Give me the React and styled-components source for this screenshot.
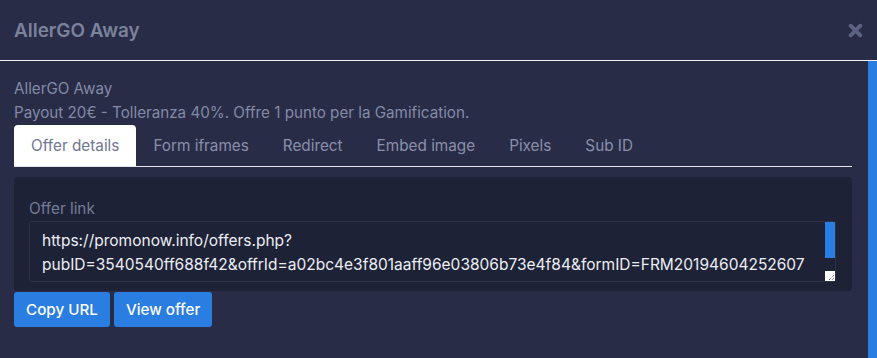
import React from "react";
import styled, { createGlobalStyle } from "styled-components";

const GlobalStyle = createGlobalStyle`
  html, body {
    margin: 0;
    padding: 0;
    background: #282c47;
  }
  body {
    font-family: Inter, "Noto Sans", "Liberation Sans", sans-serif;
  }
`;

const Modal = styled.div`
  width: 877px;
  height: 358px;
  background-color: #282c47;
  display: flex;
  flex-direction: column;
  overflow: hidden;
`;

const Header = styled.div`
  height: 60px;
  flex-shrink: 0;
  display: flex;
  align-items: center;
  justify-content: space-between;
  padding: 0 14px;
  border-bottom: 1px solid #f2f2f5;
`;

const Title = styled.h4`
  margin: 0;
  font-size: 18.9px;
  font-weight: 600;
  color: #7b829c;
`;

const CloseButton = styled.button`
  border: none;
  background: transparent;
  padding: 0;
  width: 16px;
  height: 16px;
  display: flex;
  align-items: center;
  justify-content: center;
  cursor: pointer;
`;

const Body = styled.div`
  flex: 1;
  display: flex;
`;

const Content = styled.div`
  flex: 1;
  padding: 16px 16px 0 14px;
  display: flex;
  flex-direction: column;
`;

const ScrollStrip = styled.div`
  width: 9px;
  background-color: #2a7de1;
`;

const Text = styled.p`
  margin: 0;
  font-size: 15.2px;
  line-height: 24px;
  color: #838aa6;
`;

const Tabs = styled.div`
  display: flex;
  height: 42px;
  border-bottom: 1px solid #e6e6ea;
  box-sizing: border-box;
`;

const Tab = styled.div`
  padding: 0 17px;
  display: flex;
  align-items: center;
  font-size: 15.3px;
  border-radius: 4px 4px 0 0;
  color: ${({ active }) => (active ? "#6f7692" : "#8a90ab")};
  background-color: ${({ active }) => (active ? "#ffffff" : "transparent")};
  cursor: pointer;
`;

const Card = styled.div`
  margin-top: 10px;
  padding: 20px 16px 9px 15px;
  background-color: #1e2236;
  border-radius: 4px;
  display: flex;
  flex-direction: column;
`;

const Label = styled.label`
  font-size: 15.3px;
  line-height: 24px;
  color: #757c97;
`;

const AreaWrap = styled.div`
  position: relative;
  height: 61px;
`;

const LinkArea = styled.textarea`
  width: 100%;
  height: 100%;
  box-sizing: border-box;
  padding: 7px 14px 0 12px;
  border: 1px solid #2d3249;
  border-radius: 3px;
  background-color: #1e2236;
  color: #eceef4;
  font-family: Inter, "Noto Sans", "Liberation Sans", sans-serif;
  font-size: 15.5px;
  line-height: 24px;
  resize: none;
  outline: none;
  overflow: hidden;
  display: block;
`;

const ScrollThumb = styled.div`
  position: absolute;
  top: 1px;
  right: 1px;
  width: 10px;
  height: 36px;
  background-color: #2a7de1;
`;

const Resizer = styled.div`
  position: absolute;
  right: 1px;
  bottom: 1px;
  width: 10px;
  height: 10px;
  background-color: #ffffff;
  display: flex;
  align-items: flex-end;
  justify-content: flex-end;
`;

const Actions = styled.div`
  display: flex;
  gap: 4px;
  margin-top: 1px;
`;

const Button = styled.button`
  height: 35px;
  padding: 0 12px;
  border: none;
  border-radius: 3px;
  background-color: #2a7de1;
  color: #ffffff;
  font-family: Inter, "Noto Sans", "Liberation Sans", sans-serif;
  font-size: 15.2px;
  font-weight: 500;
  cursor: pointer;
`;

const tabs = ["Offer details", "Form iframes", "Redirect", "Embed image", "Pixels", "Sub ID"];

const offerUrl =
  "https://promonow.info/offers.php?\npubID=3540540ff688f42&offrId=a02bc4e3f801aaff96e03806b73e4f84&formID=FRM20194604252607\n&subID=";

const App = () => {
  return (
    <>
      <GlobalStyle />
      <Modal>
        <Header>
          <Title>AllerGO Away</Title>
          <CloseButton aria-label="close">
            <svg width="15" height="15" viewBox="0 0 14 14">
              <path d="M2.5 2.5 L11.5 11.5 M11.5 2.5 L2.5 11.5" stroke="#5c6382" strokeWidth="3.6" strokeLinecap="round" />
            </svg>
          </CloseButton>
        </Header>
        <Body>
          <Content>
            <Text>AllerGO Away</Text>
            <Text>Payout 20€ - Tolleranza 40%. Offre 1 punto per la Gamification.</Text>
            <Tabs>
              {tabs.map((t, i) => (
                <Tab key={t} active={i === 0}>
                  {t}
                </Tab>
              ))}
            </Tabs>
            <Card>
              <Label>Offer link</Label>
              <AreaWrap>
                <LinkArea readOnly value={offerUrl} />
                <ScrollThumb />
                <Resizer>
                  <svg width="8" height="8" viewBox="0 0 8 8">
                    <path d="M7 2 L2 7 M7 5 L5 7" stroke="#555" strokeWidth="1" strokeDasharray="1 1" />
                  </svg>
                </Resizer>
              </AreaWrap>
            </Card>
            <Actions>
              <Button>Copy URL</Button>
              <Button>View offer</Button>
            </Actions>
          </Content>
          <ScrollStrip />
        </Body>
      </Modal>
    </>
  );
};

export default App;
